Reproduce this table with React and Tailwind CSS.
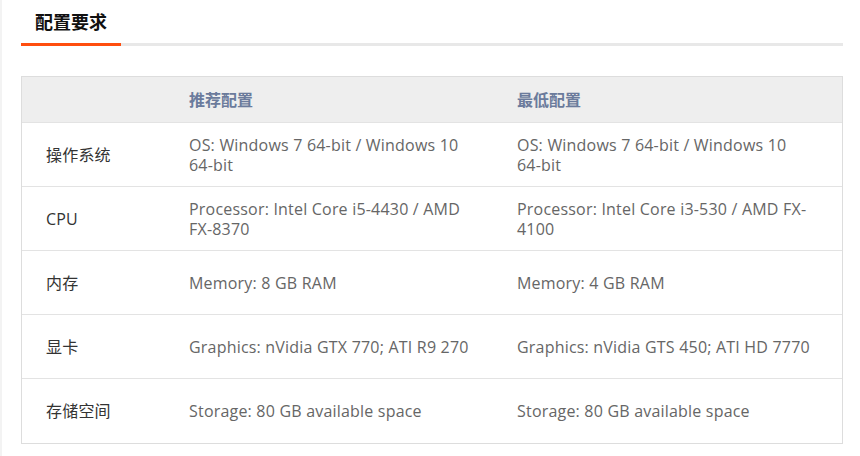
const rows = [
  ["操作系统", "OS: Windows 7 64-bit / Windows 10 64-bit", "OS: Windows 7 64-bit / Windows 10 64-bit"],
  ["CPU", "Processor: Intel Core i5-4430 / AMD FX-8370", "Processor: Intel Core i3-530 / AMD FX-4100"],
  ["内存", "Memory: 8 GB RAM", "Memory: 4 GB RAM"],
  ["显卡", "Graphics: nVidia GTX 770; ATI R9 270", "Graphics: nVidia GTS 450; ATI HD 7770"],
  ["存储空间", "Storage: 80 GB available space", "Storage: 80 GB available space"],
];

export default function App() {
  return (
    <div
      className="w-[860px] h-[456px] bg-white border-l-[2px] border-[#f3f3f3] overflow-hidden"
      style={{ fontFamily: '"Open Sans", "Noto Sans CJK SC", sans-serif' }}
    >
      <div className="pl-[19px] pr-[17px]">
        <div className="relative h-[46px] border-b-[3px] border-[#e8e8e8]">
          <div className="absolute left-0 bottom-[-3px] w-[100px] h-[3px] bg-[#ff4e0f]" />
          <div className="pt-[9px] pl-[14px] text-[18px] leading-[26px] font-bold text-[#111]">配置要求</div>
        </div>
        <div className="mt-[30px] border border-[#dddddd]">
          <div className="flex h-[46px] items-center bg-[#eeeeee] border-b border-[#e3e3e3] text-[16px] font-bold text-[#6b7b9c]">
            <div className="w-[143px]" />
            <div className="w-[328px] pl-[24px]">推荐配置</div>
            <div className="flex-1 pl-[24px]">最低配置</div>
          </div>
          {rows.map((r, i) => (
            <div
              key={i}
              className={`flex h-[64px] items-center text-[16px] leading-[20px] tracking-[0.2px] text-[#666666] ${i < rows.length - 1 ? "border-b border-[#e3e3e3]" : ""}`}
            >
              <div className="w-[143px] pl-[24px] text-[#333]">{r[0]}</div>
              <div className="w-[328px] pl-[24px]">
                <div className="w-[285px]">{r[1]}</div>
              </div>
              <div className="flex-1 pl-[24px]">
                <div className="w-[295px]">{r[2]}</div>
              </div>
            </div>
          ))}
        </div>
      </div>
    </div>
  );
}
